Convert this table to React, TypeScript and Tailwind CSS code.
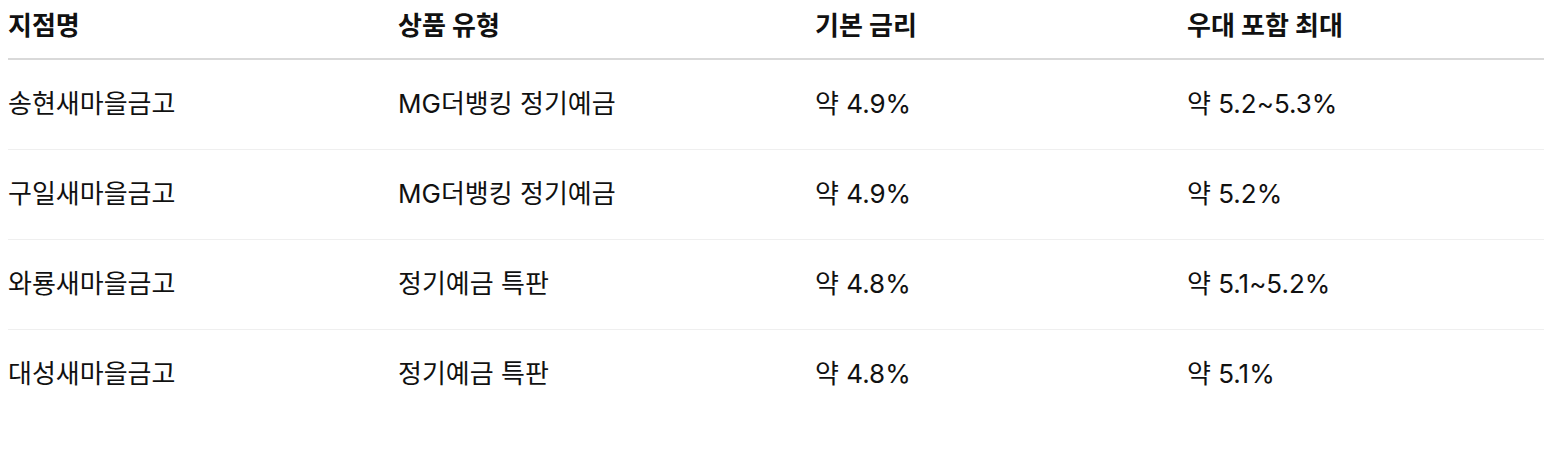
const headers = ['지점명', '상품 유형', '기본 금리', '우대 포함 최대']

const rows = [
  ['송현새마을금고', 'MG더뱅킹 정기예금', '약 4.9%', '약 5.2~5.3%'],
  ['구일새마을금고', 'MG더뱅킹 정기예금', '약 4.9%', '약 5.2%'],
  ['와룡새마을금고', '정기예금 특판', '약 4.8%', '약 5.1~5.2%'],
  ['대성새마을금고', '정기예금 특판', '약 4.8%', '약 5.1%'],
]

const font = { fontFamily: 'Inter, "Noto Sans CJK KR", sans-serif' }

export default function App() {
  return (
    <div className="min-h-[456px] bg-white px-2 text-[#111]" style={font}>
      <div className="w-[1536px]">
        <div className="grid grid-cols-[390px_417px_372px_357px] border-b-2 border-[#d9d9d9] pt-[8px] pb-[14px]">
          {headers.map((h) => (
            <div key={h} className="text-[26px] leading-[36px] font-bold">
              {h}
            </div>
          ))}
        </div>
        {rows.map((r, i) => (
          <div
            key={i}
            className={`grid grid-cols-[390px_417px_372px_357px] pt-[26px] pb-[27px] ${
              i < rows.length - 1 ? 'border-b border-[#efefef]' : ''
            }`}
          >
            {r.map((c, j) => (
              <div key={j} className="text-[26px] leading-[36px]">
                {c}
              </div>
            ))}
          </div>
        ))}
      </div>
    </div>
  )
}
